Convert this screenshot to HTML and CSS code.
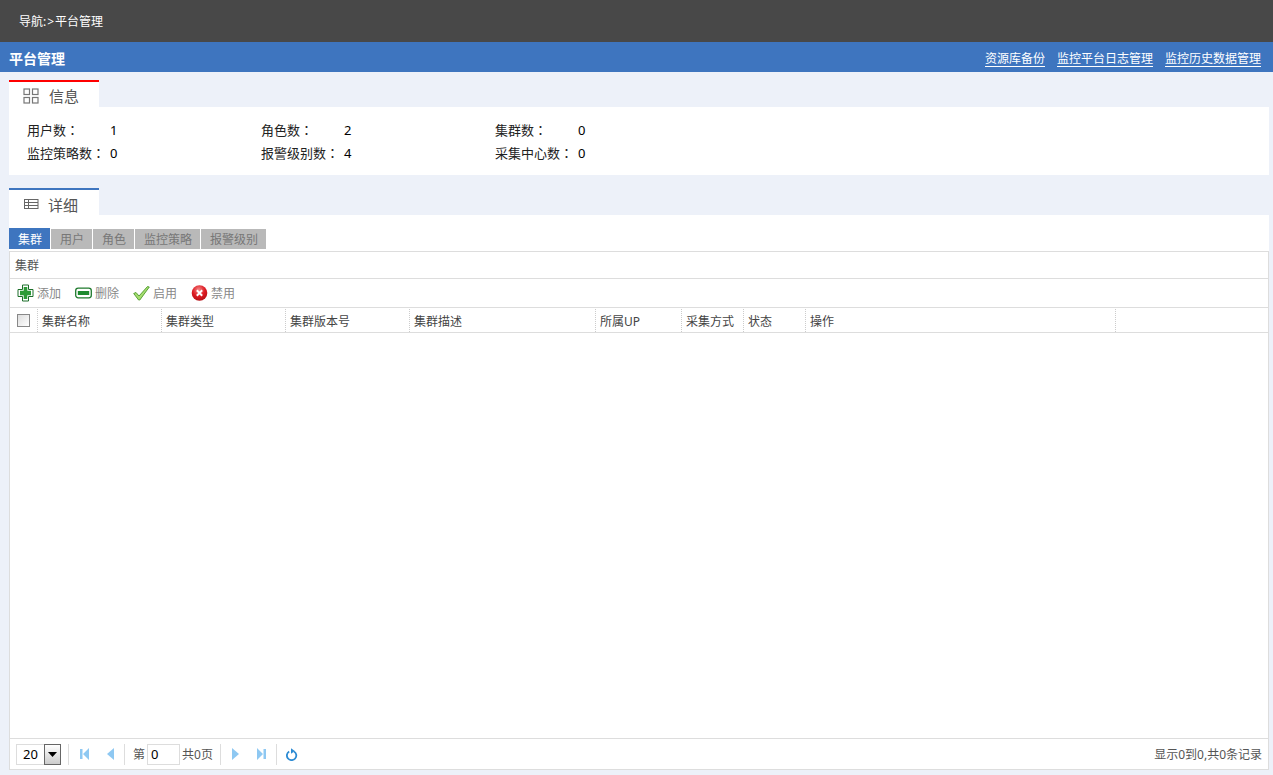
FILE: index.html
```html
<!DOCTYPE html>
<html lang="zh">
<head>
<meta charset="utf-8">
<title>平台管理</title>
<link rel="stylesheet" href="styles.css">
</head>
<body>
<div class="nav">导航:<span class="gt">&gt;</span>平台管理</div>
<div class="head">
  <div class="head-title">平台管理</div>
  <div class="head-links"><a>资源库备份</a><a>监控平台日志管理</a><a>监控历史数据管理</a></div>
</div>
<main class="main">
  <section class="sec sec-info">
    <div class="sec-tab tab-red">
      <svg class="sec-icon" width="16" height="16" viewBox="0 0 16 16"><g fill="none" stroke="#777" stroke-width="1.2"><rect x="1" y="1" width="5.5" height="5.5"/><rect x="9.5" y="1" width="5.5" height="5.5"/><rect x="1" y="9.5" width="5.5" height="5.5"/><rect x="9.5" y="9.5" width="5.5" height="5.5"/></g></svg>
      <span class="info-label">信息</span>
    </div>
    <div class="info">
      <div class="info-row"><span class="k">用户数<span class="colon" lang="zh-TW">：</span></span><span class="v">1</span></div>
      <div class="info-row"><span class="k">角色数<span class="colon" lang="zh-TW">：</span></span><span class="v">2</span></div>
      <div class="info-row"><span class="k">集群数<span class="colon" lang="zh-TW">：</span></span><span class="v">0</span></div>
      <div class="info-row"><span class="k">监控策略数<span class="colon" lang="zh-TW">：</span></span><span class="v">0</span></div>
      <div class="info-row"><span class="k">报警级别数<span class="colon" lang="zh-TW">：</span></span><span class="v">4</span></div>
      <div class="info-row"><span class="k">采集中心数<span class="colon" lang="zh-TW">：</span></span><span class="v">0</span></div>
    </div>
  </section>
  <section class="sec sec-detail">
    <div class="sec-tab tab-blue">
      <svg class="sec-icon" width="16" height="16" viewBox="0 0 16 16"><g fill="none" stroke="#666" stroke-width="1"><rect x="1.5" y="3.5" width="13.5" height="9"/><path d="M1.5 6.5h13.5M1.5 9.5h13.5M5.5 3.5v9"/></g></svg>
      <span class="detail-label">详细</span>
    </div>
    <div class="detail">
      <div class="tabs">
        <span class="tab on">集群</span><span class="tab">用户</span><span class="tab">角色</span><span class="tab">监控策略</span><span class="tab">报警级别</span>
      </div>
      <div class="grid">
        <div class="title">集群</div>
        <div class="tools">
          <span class="tool"><svg width="17" height="18" viewBox="0 0 17 18"><path d="M5.500 1h6v4.500H16v7h-4.500V17h-6v-4.500H1v-7h4.500z" fill="#fff" stroke="#1d6f2a" stroke-width="1" stroke-linejoin="round"/><path d="M6.700 3h3.600v3.700h3.700v4.600h-3.700V15H6.700v-3.700H3V6.700h3.700z" fill="#2c9a36"/></svg>添加</span>
          <span class="tool"><svg width="17" height="18" viewBox="0 0 17 18"><rect x="0.700" y="4.200" width="15.600" height="9.600" rx="2.500" fill="#fff" stroke="#1f7a2d" stroke-width="1.300"/><rect x="2.800" y="7" width="11.400" height="4" fill="#1d8a2e"/></svg>删除</span>
          <span class="tool"><svg width="17" height="18" viewBox="0 0 17 18"><path d="M0.700 9.500l2.300-1 3 3.500L14.500 2.500 16.300 3 6.800 16H5.600z" fill="#a6dd70" stroke="#4c9a2a" stroke-width="0.900" stroke-linejoin="round"/></svg>启用</span>
          <span class="tool"><svg width="17" height="18" viewBox="0 0 17 18"><defs><radialGradient id="redball" cx="0.450" cy="0.300" r="0.800"><stop offset="0" stop-color="#f58a8a"/><stop offset="0.500" stop-color="#dd1a22"/><stop offset="1" stop-color="#a80e14"/></radialGradient></defs><circle cx="8.500" cy="9" r="7.800" fill="url(#redball)"/><path d="M5.800 6.300l5.400 5.400M11.200 6.300l-5.400 5.400" stroke="#fff" stroke-width="2"/></svg>禁用</span>
        </div>
        <div class="cols">
          <div class="col c-check"><span class="check"></span></div>
          <div class="col c-name">集群名称</div>
          <div class="col c-type">集群类型</div>
          <div class="col c-ver">集群版本号</div>
          <div class="col c-desc">集群描述</div>
          <div class="col c-up">所属UP</div>
          <div class="col c-mode">采集方式</div>
          <div class="col c-state">状态</div>
          <div class="col c-op">操作</div>
        </div>
        <div class="body"></div>
        <div class="pager">
          <div class="size"><span class="size-v">20</span><span class="size-btn"><svg width="9" height="5" viewBox="0 0 9 5"><path d="M0 0h9L4.500 5z" fill="#000"/></svg></span></div>
          <span class="sep"></span>
          <span class="pbtn"><svg width="9" height="12" viewBox="0 0 9 12"><path d="M0 1h2.500v10H0zM9 0v12L3 6z" fill="#8ec8f2"/></svg></span>
          <span class="pbtn"><svg width="7" height="12" viewBox="0 0 7 12"><path d="M7 0v12L0 6z" fill="#8ec8f2"/></svg></span>
          <span class="sep"></span>
          <span class="ptxt">第</span><span class="pinput">0</span><span class="ptxt ptotal">共0页</span>
          <span class="sep"></span>
          <span class="pbtn"><svg width="7" height="12" viewBox="0 0 7 12"><path d="M0 0v12l7-6z" fill="#8ec8f2"/></svg></span>
          <span class="pbtn"><svg width="9" height="12" viewBox="0 0 9 12"><path d="M9 1H6.500v10H9zM0 0v12l6-6z" fill="#8ec8f2"/></svg></span>
          <span class="sep"></span>
          <span class="pbtn"><svg width="12" height="13" viewBox="0 0 12 13"><path d="M8 3.400A4.700 4.700 0 1 1 3.200 3.400" fill="none" stroke="#2b8ad3" stroke-width="1.800"/><path d="M5 .3v5.400l3.800-2.700z" fill="#2b8ad3"/></svg></span>
          <span class="pinfo">显示0到0,共0条记录</span>
        </div>
      </div>
    </div>
  </section>
</main>
</body>
</html>
```
FILE: styles.css
```css
* { box-sizing: border-box; }
html, body { height: 100%; }
body {
  margin: 0;
  background: #edf1f9;
  font-family: "Noto Sans", "Noto Sans CJK SC", sans-serif;
  font-size: 12px;
  color: #333;
  overflow: hidden;
}
.nav {
  height: 42px;
  background: #484848;
  color: #fff;
  line-height: 44px;
  padding-left: 19px;
}
.gt { padding: 0 1px; }
.head {
  height: 30px;
  background: #3e75bf;
  color: #fff;
  display: flex;
  justify-content: space-between;
  align-items: center;
  padding: 2px 12px 0 9px;
}
.head-title { font-size: 14px; font-weight: 700; }
.head-links { display: flex; gap: 12px; }
.head-links a {
  color: #fff;
  border-bottom: 1px solid #fff;
  line-height: 15px;
  margin-top: 1px;
}
.main { padding: 8px 4px 0 9px; }
.sec-tab {
  width: 90px;
  height: 27px;
  background: #fff;
  display: flex;
  align-items: center;
  padding: 2px 0 0 14px;
  gap: 9px;
  font-size: 15px;
  color: #555;
}
.tab-red { border-top: 2px solid #f00; }
.tab-blue { border-top: 2px solid #3e75bf; }
.info-label { padding-left: 1px; }
.detail-label { padding-top: 1px; }
.info {
  background: #fff;
  height: 68px;
  padding: 11px 18px 0;
  display: grid;
  grid-template-columns: repeat(3, 234px);
  grid-auto-rows: 23px;
  color: #222;
  font-size: 13px;
}
.info-row { display: flex; align-items: center; }
.k { width: 83px; }
.colon { font-family: "Noto Sans CJK TC", sans-serif; }
.v { color: #000; }
.sec-detail { margin-top: 13px; }
.detail { background: #fff; padding-top: 13px; }
.tabs { display: flex; gap: 1px; height: 23px; }
.tab {
  height: 20px;
  margin-top: 1px;
  background: #b9b9b9;
  color: #777;
  padding: 0 8px 0 9px;
  line-height: 22px;
}
.tab.on { background: #3e75bf; color: #fff; margin-top: 0; height: 21px; line-height: 24px; }
.grid {
  border: 1px solid #ddd;
  height: 519px;
  display: flex;
  flex-direction: column;
}
.title {
  height: 27px;
  line-height: 27px;
  padding-left: 5px;
  color: #555;
  border-bottom: 1px solid #ddd;
}
.tools {
  height: 29px;
  display: flex;
  align-items: center;
  padding-left: 7px;
  gap: 14px;
  border-bottom: 1px solid #ddd;
  color: #888;
}
.tool { display: flex; align-items: center; gap: 3px; }
.tool svg { flex: none; }
.cols {
  height: 25px;
  display: flex;
  border-bottom: 1px solid #ddd;
  color: #444;
}
.col {
  border-right: 1px dotted #ccc;
  padding-left: 4px;
  line-height: 25px;
  height: 23px;
  margin-top: 1px;
}
.c-check { width: 28px; padding-left: 7px; display: flex; align-items: center; }
.c-name, .c-type, .c-ver { width: 124px; }
.c-desc { width: 186px; }
.c-up { width: 86px; }
.c-mode, .c-state { width: 62px; }
.c-op { width: 310px; }
.check {
  width: 13px;
  height: 13px;
  border: 1px solid #888;
  background: linear-gradient(135deg, #ddd, #fff);
}
.body { flex: 1; }
.pager {
  height: 31px;
  border-top: 1px solid #ddd;
  display: flex;
  align-items: center;
  padding: 0 6px;
  color: #555;
}
.size {
  width: 45px;
  height: 21px;
  border: 1px solid #ddd;
  display: flex;
  justify-content: space-between;
  margin-right: 6px;
}
.size-v { color: #000; padding-left: 6px; line-height: 19px; font-size: 13px; }
.size-btn {
  width: 17px;
  height: 21px;
  margin: -1px -1px 0 0;
  border: 1px solid #666;
  background: linear-gradient(#fff, #ccc);
  display: flex;
  align-items: center;
  justify-content: center;
}
.sep { width: 1px; height: 21px; background: #ddd; margin: 0 2px 0 1px; }
.pbtn { width: 26px; display: flex; justify-content: center; align-items: center; }
.ptxt { padding-left: 6px; }
.pinput {
  width: 33px;
  height: 21px;
  border: 1px solid #ddd;
  color: #000;
  padding-left: 3px;
  line-height: 19px;
  margin-left: 2px;
  font-size: 13px;
}
.ptotal { padding: 0 6px 0 2px; }
.pinfo { margin-left: auto; }
```
